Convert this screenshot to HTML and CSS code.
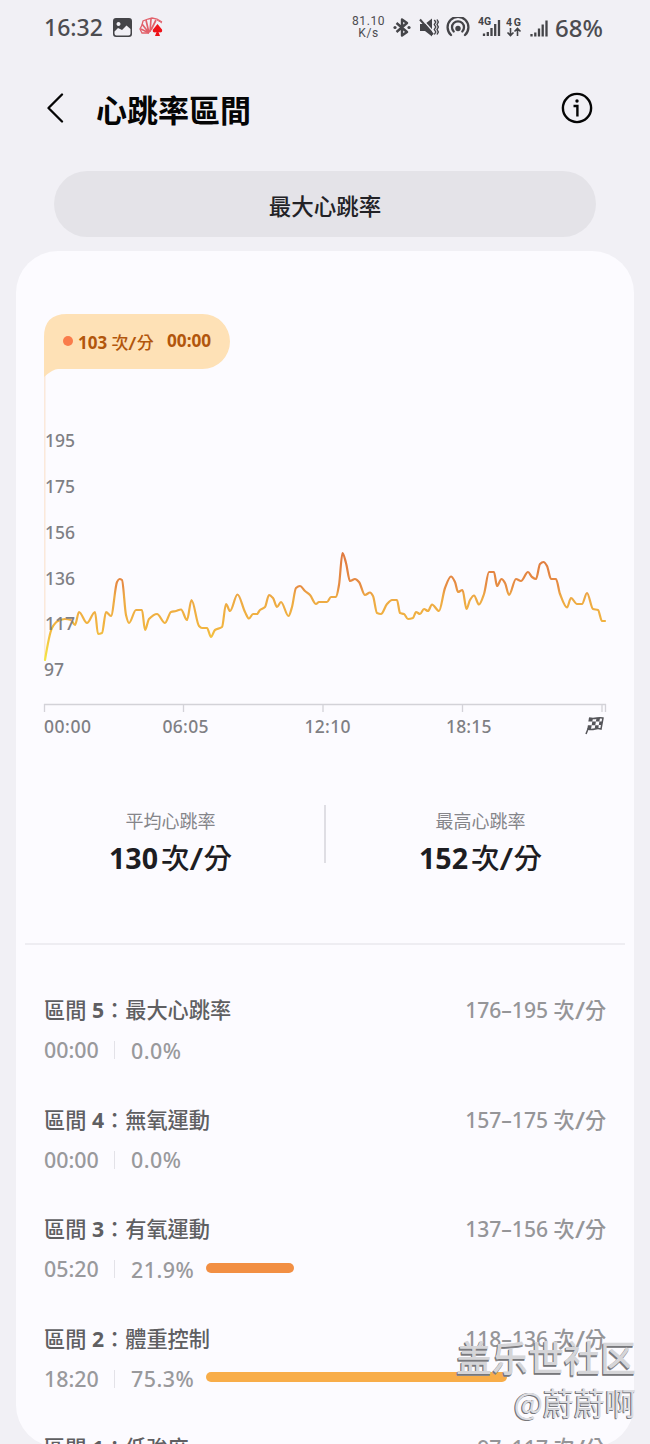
FILE: index.html
```html
<!DOCTYPE html>
<html lang="zh-Hant">
<head>
<meta charset="utf-8">
<title>心跳率區間</title>
<link rel="stylesheet" href="styles.css">
</head>
<body>
<div class="screen">
  <header class="status">
    <span class="clock">16:32</span>
    <svg class="s-photo" width="19" height="19" viewBox="0 0 19 19"><path fill="#444448" fill-rule="evenodd" d="M3 0h13q3 0 3 3v13q0 3-3 3H3q-3 0-3-3V3Q0 0 3 0ZM5.500 4a2 2 0 1 0 .01 0ZM1.500 15.500q0 2 2 2h12q2 0 2-2V11l-4-3.500-4.500 4.500L5 10l-3.500 3.500Z"/></svg>
    <svg class="s-fan" width="25" height="20" viewBox="0 0 25 20"><g fill="none" stroke="#e2606a" stroke-width="1.300"><path d="M10 16 3 16 1 12 3 8 4 4 9 2 13 1 18 2 23 5"/><path d="M10 16 2 12M10 16 3 7M10 16 7 3M11 15 12 2M12 13 17 3" stroke-width="1.700"/><path d="m18 3 5 3" stroke-width="1"/></g><path fill="#ee1218" d="M18.500 7 23 12.500q.8 3-2 3l-1.500-.5 1.500 4h-5l1.500-4-1.500.5q-3 0-2-3Z"/></svg>
    <span class="speed"><span>81.10</span><span>K/s</span></span>
    <svg class="s-bt" width="18" height="19" viewBox="0 0 18 19"><path d="M3.500 5 14 14 9 17.500v-16L14 5 3.500 14" fill="none" stroke="#444448" stroke-width="2.400" stroke-linejoin="round"/><circle cx="2" cy="9.500" r="1.600" fill="#444448"/><circle cx="16" cy="9.500" r="1.600" fill="#444448"/></svg>
    <svg class="s-mute" width="20" height="19" viewBox="0 0 20 19"><path fill="#444448" d="M1 6h5l7-5.500v18L6 13H1Z"/><path d="m2 0 13 14.500" stroke="#f1f0f5" stroke-width="1.400"/><path d="m1 1.500 13 15" stroke="#444448" stroke-width="2"/><path d="m15.300 2 1.500 2-1.500 2.500 1.500 2.500-1.500 2.500 1.500 2.500-1.500 2.500M18 1.500 19.300 4 18 6.500 19.300 9 18 11.500l1.300 2.500L18 16.500" fill="none" stroke="#444448" stroke-width="1.400"/></svg>
    <svg class="s-hot" width="24" height="20" viewBox="0 0 24 20"><g fill="none" stroke="#444448" stroke-width="2.300" stroke-linecap="round"><path d="M5 18a10.400 10.400 0 1 1 14 0"/><path d="M7.700 14.500a6 6 0 1 1 8.600 0"/></g><circle cx="12" cy="11.500" r="2.700" fill="#444448"/></svg>
    <svg class="s-sig1" width="23" height="20" viewBox="0 0 23 20"><text class="g4" x="0" y="8">4G</text><path stroke="#444448" stroke-width="2.300" d="M6 19v-2.500M9.800 19v-4M13.500 19v-8M17.200 19V7M21 19V3"/></svg>
    <svg class="s-data" width="16" height="20" viewBox="0 0 16 20"><text class="g4" x="0" y="8.500" textLength="15">4G</text><path fill="none" stroke="#444448" stroke-width="1.600" d="M4.500 11v7M1.500 15.500l3 3 3-3M11.500 19v-7M8.500 14.500l3-3 3 3"/></svg>
    <svg class="s-sig2" width="18" height="18" viewBox="0 0 18 18"><path stroke="#444448" stroke-width="2.300" d="M1.500 17.500V15M5.300 17.500v-4M9 17.500V9.500M12.700 17.500v-12M16.500 17.500v-16"/></svg>
    <span class="battery">68%</span>
  </header>

  <div class="titlebar">
    <svg class="back" width="18" height="30" viewBox="0 0 18 30"><path d="M15 1.500 1.500 15 15 28.500" fill="none" stroke="#050505" stroke-width="2.300" stroke-linecap="round" stroke-linejoin="round"/></svg>
    <h1 class="title">心跳率區間</h1>
    <svg class="info" width="32" height="32" viewBox="0 0 32 32"><circle cx="16" cy="16" r="14.100" fill="none" stroke="#050505" stroke-width="2.400"/><circle cx="16" cy="9" r="1.700" fill="#050505"/><path d="M12.500 14h3.900v10.500" fill="none" stroke="#050505" stroke-width="2.400"/></svg>
  </div>

  <button class="pill">最大心跳率</button>

  <main class="card">
    <section class="plot">
      <svg class="chart" width="618" height="430" viewBox="16 314 618 430">
        <defs>
          <linearGradient id="heat" gradientUnits="userSpaceOnUse" x1="0" y1="552" x2="0" y2="662">
            <stop offset="0" stop-color="#df783f"/><stop offset=".32" stop-color="#e78e43"/><stop offset=".4" stop-color="#eda944"/><stop offset=".7" stop-color="#f2b540"/><stop offset="1" stop-color="#f4ea45"/>
          </linearGradient>
        </defs>
        <path d="M44.800 372V660" stroke="#fbe5d5" stroke-width="1.300"/>
        <path id="trace" fill="none" stroke="url(#heat)" stroke-width="2.200" stroke-linecap="round" stroke-linejoin="round"/>
        <g class="axis">
          <text x="45" y="447">195</text><text x="45" y="493">175</text><text x="45" y="538.500">156</text>
          <text x="45" y="584.500">136</text><text x="45" y="630">117</text><text x="44" y="675.500">97</text>
          <text x="44" y="733" textLength="47">00:00</text><text x="162.500" y="733" textLength="46">06:05</text><text x="304.500" y="733" textLength="46">12:10</text><text x="446" y="733" textLength="45.500">18:15</text>
        </g>
        <path d="M44 704.500H606M44.500 704v8M183.500 704v8M323 704v8M462.500 704v8M602 704v8M605.500 704v8" fill="none" stroke="#d3d2d8" stroke-width="1.300"/>
        <g transform="translate(585 717)">
          <path d="M4 1q4 1 8 0 3-.7 6 0l-2 11q-3-.8-6 0-4 1-7 0L1 17" fill="#fcfbff" stroke="#55555a" stroke-width="1.500"/>
          <path fill="#55555a" d="M4 1h4l-.7 3.500h-4ZM11.500 1h3.500l-.6 3.500h-3.500ZM7.300 4.500h3.600l-.6 3.700H6.700ZM14.400 4.500h3l-.6 3.500h-3ZM2.900 8.200h3.800L6 12H2.300ZM10.300 8.200h3.500l-.6 3.600H9.700Z"/>
        </g>
      </svg>
      <div class="tip">
        <svg class="tip-shape" width="186" height="64" viewBox="0 0 186 64"><path fill="#fee1b6" d="M0 63V23Q0 0 23 0H158.500a27.500 27.500 0 0 1 0 55H14q-5 0-14 8Z"/></svg>
        <i class="dot"></i><b class="tip-rate">103 <span class="per">次<i>/</i>分</span></b><b class="tip-time">00:00</b>
      </div>
    </section>

    <section class="stats">
      <div class="stat"><span class="stat-label">平均心跳率</span><strong class="stat-value">130<span class="unit per">次<i>/</i>分</span></strong></div>
      <div class="stat"><span class="stat-label">最高心跳率</span><strong class="stat-value">152<span class="unit per">次<i>/</i>分</span></strong></div>
    </section>

    <section class="zones">
      <div class="zone"><div class="row"><span class="name">區間 <b>5</b>：最大心跳率</span><span class="range">176–195 <span class="per">次<i>/</i>分</span></span></div><div class="detail"><span class="time">00:00</span><span class="pct">0.0%</span></div></div>
      <div class="zone"><div class="row"><span class="name">區間 <b>4</b>：無氧運動</span><span class="range">157–175 <span class="per">次<i>/</i>分</span></span></div><div class="detail"><span class="time">00:00</span><span class="pct">0.0%</span></div></div>
      <div class="zone"><div class="row"><span class="name">區間 <b>3</b>：有氧運動</span><span class="range">137–156 <span class="per">次<i>/</i>分</span></span></div><div class="detail"><span class="time">05:20</span><span class="pct">21.9%</span><i class="bar orange" style="width:87.600px"></i></div></div>
      <div class="zone"><div class="row"><span class="name">區間 <b>2</b>：體重控制</span><span class="range">118–136 <span class="per">次<i>/</i>分</span></span></div><div class="detail"><span class="time">18:20</span><span class="pct">75.3%</span><i class="bar amber" style="width:301.200px"></i></div></div>
      <div class="zone"><div class="row"><span class="name">區間 <b>1</b>：低強度</span><span class="range">97–117 <span class="per">次<i>/</i>分</span></span></div></div>
    </section>
  </main>

  <div class="mark"><span class="mark-site">盖乐世社区</span><span class="mark-user">@蔚蔚啊</span></div>
</div>
<script src="chart.js"></script>
</body>
</html>
```

FILE: styles.css
```css
* { box-sizing: border-box; }
body { margin: 0; background: #f1f0f5; font-family: "Noto Sans", "Noto Sans CJK TC", sans-serif; }
.screen { position: relative; width: 650px; height: 1444px; overflow: hidden; }
svg { display: block; flex: none; }

.status { display: flex; align-items: center; height: 54px; padding-left: 44px; color: #4c4c50; }
.clock { width: 69px; font-size: 23px; font-weight: 500; }
.s-fan { margin-left: 7px; }
.speed { display: flex; flex-direction: column; align-items: center; width: 33px; margin-left: 188px; font: 400 12px/12px Roboto, sans-serif; letter-spacing: .6px; }
.s-bt { margin-left: 8px; }
.s-mute { margin-left: 8px; }
.s-hot { margin-left: 7px; }
.s-sig1 { margin-left: 8px; }
.s-data { margin-left: 5px; }
.s-sig2 { margin: 2px 0 0 8px; }
.g4 { font: 700 10.500px Roboto, sans-serif; fill: #444448; }
.battery { margin-left: 7px; font-size: 24px; font-weight: 500; }

.titlebar { display: flex; align-items: center; height: 108px; padding: 0 57px 0 47px; }
.title { flex: 1; margin: 3px 0 0 31px; font-size: 31px; line-height: 40px; font-weight: 700; color: #050505; }

.pill { display: block; width: 542px; height: 66px; margin: 9px 0 0 54px; padding: 5px 0 0; border: 0; border-radius: 33px; background: #e4e3e8; color: #222226; font: 500 22.500px/32px "Noto Sans", "Noto Sans CJK TC", sans-serif; }

.card { width: 618px; height: 1196px; margin: 14px 0 0 16px; padding-top: 63px; border-radius: 42px; background: #fcfbff; }
.per i { display: inline-block; margin: 0 .05em; font-style: normal; transform: scale(1.25, 1.1); }
.plot { position: relative; height: 430px; }
.axis { font-size: 17.500px; font-weight: 500; fill: #7f7f84; }
.tip { position: absolute; left: 28px; top: 0; display: flex; align-items: center; width: 186px; height: 55px; padding-left: 19px; color: #b2560c; font-size: 17px; }
.tip-shape { position: absolute; left: 0; top: 0; }
.dot { position: relative; width: 10px; height: 10px; margin-top: -1px; border-radius: 50%; background: #fa7c4b; }
.tip-rate { position: relative; width: 77px; margin-left: 5px; font-weight: 700; white-space: nowrap; }
.tip-rate span { font-weight: 500; }
.tip-time { position: relative; margin: -2px 0 0 12px; font-size: 17.200px; font-weight: 700; }

.stats { display: grid; grid-template-columns: 1fr 1fr; position: relative; height: 201px; margin: 0 9px; padding-top: 61px; border-bottom: 2px solid #eeedf2; }
.stats::after { content: ""; position: absolute; left: 299px; top: 61px; width: 2px; height: 58px; background: #dfdee4; }
.stat { display: flex; flex-direction: column; align-items: center; }
.stat:first-child { padding-right: 9px; }
.stat:last-child { padding-left: 11px; }
.stat-label { font-size: 18px; line-height: 32px; color: #85858a; }
.stat-value { font-size: 28.600px; line-height: 42px; font-weight: 700; color: #1d1d22; }
.unit { margin-left: 3px; font-weight: 500; }

.zones { padding: 46px 28px 0; }
.zone { height: 109.600px; }
.row { display: flex; justify-content: space-between; height: 38px; line-height: 38px; font-size: 21.200px; }
.name { color: #5f5f62; font-weight: 500; }
.name b { font-weight: 700; }
.range { color: #959598; font-size: 21.100px; font-weight: 500; }
.detail { display: flex; align-items: center; height: 42px; font-size: 21.400px; font-weight: 500; color: #99999c; }
.time { width: 71px; border-right: 1px solid #e3e2e8; line-height: 18px; }
.pct { min-width: 63px; margin-left: 16px; letter-spacing: .5px; }
.bar { height: 10px; margin-left: 12px; margin-top: -3px; border-radius: 5px; }
.orange { background: #f28f43; }
.amber { background: #f8ad49; }

.mark { position: absolute; right: 14px; top: 1332px; display: flex; flex-direction: column; align-items: flex-end; font-family: "Noto Sans CJK SC", sans-serif; white-space: nowrap; }
.mark-site { font-size: 36px; line-height: 48px; font-weight: 500; color: #d5d5d8; text-shadow: -1px 1px 0 #77777b, -1px 2px 0 #88888c; }
.mark-user { font-size: 31px; line-height: 44px; font-weight: 400; color: #dcdce0; text-shadow: -1px 0 0 #77777b, -1px 1px 0 #77777b; }
```

FILE: chart.js
```js
const pts = [[45,660],[52,628],[58,621],[65,619],[71,620],[75,625],[79,612],[87,623],[95,612],[98,634],[102,633],[106,612],[111,616],[117,582],[119.5,579],[122,580],[126,615],[129,623],[136,610],[142,610],[145,630],[149,619],[157,614],[165,623],[171,612],[176,611],[181,609.5],[187,620],[191.5,600],[199,626],[202,628],[207,628],[211,637],[215,630],[222,627],[226,604],[230,611],[237.5,594.5],[245,612],[249,618.5],[253,614],[257,614],[260,610],[265,607],[269,595],[273,598],[277,607],[281,602],[288.5,616],[292,607],[296,588],[300,586],[305,591],[310,595],[316,604],[319,602],[327,602],[331,597],[336,597],[339,585],[342.5,553],[346,563],[350,581],[355,579],[359,582],[365,595],[370,592.5],[373,596],[377,613],[381,614],[387,604],[392,600],[397,600],[400,613],[404,614],[408,619],[413,618],[416,612],[420,614],[424,609],[428,611],[432,604.5],[439,611],[445,588],[451,576.5],[455,582],[458,592],[462.5,590],[466.5,609],[470,600],[474,595.5],[479,604.5],[484,594],[489,572],[494,572],[497,586],[501.5,579],[505,583],[509,595],[516,579],[521,581],[528,572],[532,577],[536,579],[540,564],[543.5,562],[547,566],[551,579],[556,579],[560,594],[567,607.5],[571,598],[577,604],[582,604],[587,593],[593,609],[598,610],[602,621],[605,621]];

// Monotone cubic interpolation keeps every local peak on its sample.
const slope = pts.map((p, i) => {
  if (i === 0 || i === pts.length - 1) return 0;
  const a = (p[1] - pts[i - 1][1]) / (p[0] - pts[i - 1][0]);
  const b = (pts[i + 1][1] - p[1]) / (pts[i + 1][0] - p[0]);
  return a * b <= 0 ? 0 : 2 * a * b / (a + b);
});
slope[0] = -6;
let d = `M${pts[0]}`;
for (let i = 1; i < pts.length; i++) {
  const [x0, y0] = pts[i - 1], [x1, y1] = pts[i], h = (x1 - x0) / 3;
  d += `C${x0 + h},${y0 + slope[i - 1] * h} ${x1 - h},${y1 - slope[i] * h} ${x1},${y1}`;
}
document.getElementById('trace').setAttribute('d', d);
```
